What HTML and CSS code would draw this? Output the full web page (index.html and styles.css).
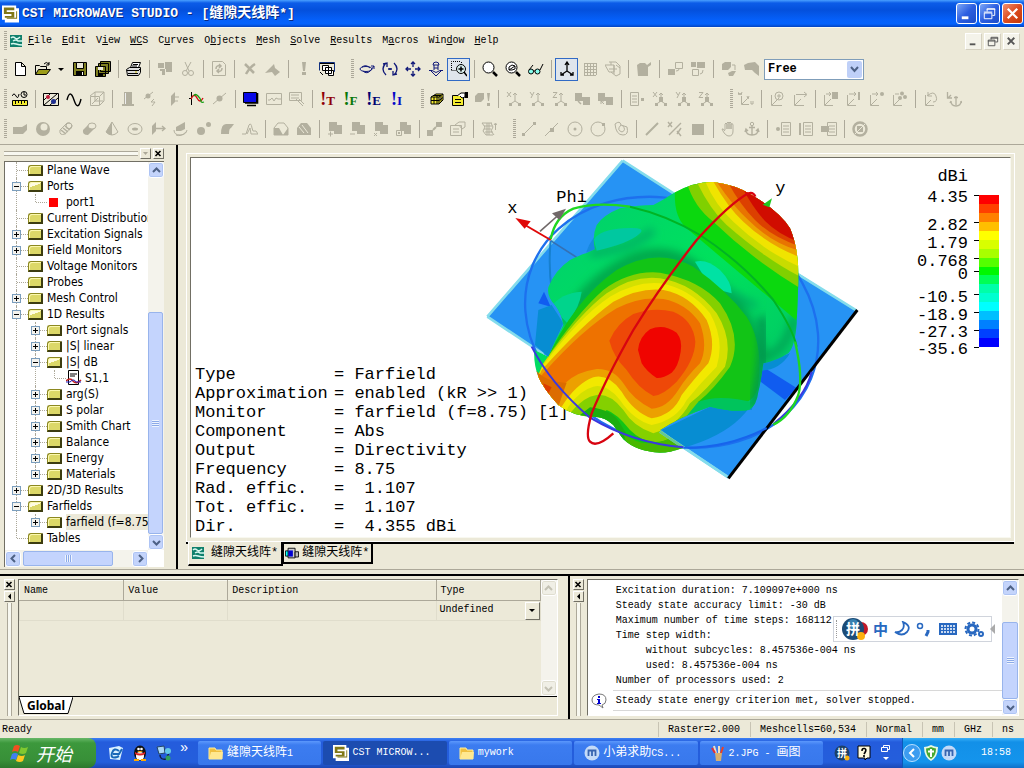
FILE: index.html
```html
<!DOCTYPE html>
<html lang="zh-CN">
<head>
<meta charset="utf-8">
<title>CST MICROWAVE STUDIO</title>
<link rel="stylesheet" href="styles.css">
</head>
<body>
<div class="app">
<header class="title">
  <svg class="logo" viewBox="0 0 18 18"><path d="M0 0h15v3h3v15H3v-3H0z" fill="#fff"/><path d="M2 2h11v3H5v2h8v6H3v-2h7V9H2z" fill="#807818"/><path d="M5 14h11V6h-1v7H5z" fill="#807818"/></svg>
  <h1>CST MICROWAVE STUDIO - [<span>缝隙天线阵</span>*]</h1>
  <button class="wb" aria-label="Minimize"><svg viewBox="0 0 20 20"><path d="M5 13h7v3H5z" fill="#fff"/></svg></button>
  <button class="wb" aria-label="Restore"><svg viewBox="0 0 20 20" fill="none" stroke="#fff"><path d="M7.500 8V5h8v7H13M7 5.500h9"/><path d="M4.500 9.500h8v6h-8zM4 8.500h9"/></svg></button>
  <button class="wb close" aria-label="Close"><svg viewBox="0 0 20 20"><path d="M5 5l10 10M15 5L5 15" stroke="#fff" stroke-width="2.400"/></svg></button>
</header>
<nav class="menu">
  <i class="grip"></i>
  <svg class="mi" viewBox="0 0 14 13"><path d="M0 0h12v12H0z" fill="#10806c"/><path d="M1 3q2-2 4 0t5-1M3 6q3-2 5 0h5M1 9q2-1 5 0t7 1" stroke="#d8f8f0" fill="none" stroke-width="1.500"/></svg>
  <button><u>F</u>ile</button><button><u>E</u>dit</button><button>V<u>i</u>ew</button><button><u>W</u><u>C</u>S</button><button>C<u>u</u>rves</button><button>O<u>b</u>jects</button><button><u>M</u>esh</button><button><u>S</u>olve</button><button><u>R</u>esults</button><button>M<u>a</u>cros</button><button>Win<u>d</u>ow</button><button><u>H</u>elp</button>
  <span class="mdi">
    <button aria-label="Minimize document"><svg viewBox="0 0 16 16"><path d="M4 10h6v2H4z" fill="#555"/></svg></button>
    <button aria-label="Restore document"><svg viewBox="0 0 16 16" fill="none" stroke="#555"><path d="M6.500 6V3.500h7v5H11M6 4.500h8M3.500 6.500h7v6h-7zM3 7.500h8"/></svg></button>
    <button aria-label="Close document"><svg viewBox="0 0 16 16"><path d="M4 4l7 7M11 4l-7 7" stroke="#555" stroke-width="2"/></svg></button>
  </span>
</nav>

<div class="bar" role="toolbar" aria-label="Standard">
  <i class="grip"></i>
  <button class="tb" aria-label="New"><svg viewBox="0 0 16 16"><path d="M3.500 1.500h6l4 4v9h-10zM9.500 1.500v4h4" fill="#fff"/></svg></button>
  <button class="tb" aria-label="Open"><svg viewBox="0 0 16 16"><path d="M.5 13.500v-9h4l1 1h6v3M9 3q2-3 5 0M14 1v3h-3" /><path d="M.5 13.500l3-5h12l-4 5z" fill="#9c9c18"/></svg></button>
  <button class="drop" aria-label="Recent files"></button>
  <button class="tb" aria-label="Save"><svg viewBox="0 0 16 16"><path d="M1.500 1.500h13v13h-13z" fill="#808020"/><path d="M4.500 1.500h7v6h-7z" fill="#ece9d8"/><path class="f" d="M4 10h8v5H4z"/><path d="M10.500 11v3" stroke="#fff"/></svg></button>
  <button class="tb" aria-label="Save all"><svg viewBox="0 0 16 16"><path d="M5.500.5h10v10h-10zM3.500 2.500h10v10h-10zM.5 5.500h10v10H.5z" fill="#808020"/><path d="M3 6h5v3H3z" fill="#ece9d8" stroke="none"/><path class="f" d="M3 12h5v3H3z"/></svg></button>
  <i class="sep"></i>
  <button class="tb" aria-label="Print"><svg viewBox="0 0 16 16"><path d="M4.500 6.500l2-5h8l-2 5M7 3.500h5M6 5h5" fill="#fff"/><path d="M.5 8.500l3-2h11v5l-2 3h-11z" fill="#ddd"/><path d="M1 9.500h12M2 12.500h10M13 9l2-2" /><path d="M9 11h2" stroke="#c8b800"/></svg></button>
  <i class="sep"></i>
  <button class="tb" disabled aria-label="Copy"><svg viewBox="0 0 16 16"><path class="f" d="M1 2h6v5H1zM8 1h7v10H9V8h-1zM3 8h5v6H5v-4H3z"/></svg></button>
  <button class="tb" disabled aria-label="Cut"><svg viewBox="0 0 16 16"><path d="M5 1l4 9M11 1l-5 9"/><circle cx="5" cy="12" r="2.500"/><circle cx="11" cy="12" r="2.500"/></svg></button>
  <i class="sep"></i>
  <button class="tb" disabled aria-label="Update"><svg viewBox="0 0 16 16"><path d="M1.500.5h10l3 3v11h-13z"/><path d="M5 8q0-4 4-3M11 7q0 4-4 3M8 3l2 2-2 2M8 8l-2 2 2 2" stroke-width="1.500"/></svg></button>
  <i class="sep"></i>
  <button class="tb" disabled aria-label="Delete"><svg viewBox="0 0 16 16"><path d="M3 3l9 9M13 3q-5 3-9 10" stroke-width="2.500"/></svg></button>
  <button class="tb" disabled aria-label="Transform"><svg viewBox="0 0 16 16"><path class="f" d="M0 12L9 3l1 4 5 4-5 4-3-4z"/></svg></button>
  <i class="sep"></i>
  <button class="tb" disabled aria-label="Abort"><svg viewBox="0 0 16 16"><path class="f" d="M6 1h4l-1 9H7zM6 11h4v3H6z"/></svg></button>
  <button class="tb" aria-label="Windows"><svg viewBox="0 0 16 16"><path d="M.5 9.500v-8h15v9h-4" stroke="#103080"/><path d="M1 2.500h14M3.500 4.500h6v5h-6zM6.500 6.500h6v6h-6zM9.500 9.500h5v5h-5zM1 11l3 3" stroke="#000" fill="#fff"/></svg></button>
  <i class="grip gap"></i>
  <button class="tb b" aria-label="Rotate plane"><svg viewBox="0 0 16 16"><ellipse cx="7" cy="8" rx="6" ry="2.500"/><path d="M4 10q4 4 8-1l3-4M3 6q4-3 8 1M12 5h3v3"/></svg></button>
  <button class="tb b" aria-label="Rotate"><svg viewBox="0 0 16 16"><path d="M4 2q-6 6 0 12M12 14q6-6 0-12M1 3l4-1v4M15 13l-4 1v-4M6 8h4M8 7v2" stroke-width="1.300"/></svg></button>
  <button class="tb b" aria-label="Pan"><svg viewBox="0 0 16 16"><path d="M8 1v5M8 10v5M1 8h5M10 8h5M6 3l2-2 2 2M6 13l2 2 2-2M3 6L1 8l2 2M13 6l2 2-2 2" stroke-width="1.300"/></svg></button>
  <button class="tb b" aria-label="Dynamic zoom"><svg viewBox="0 0 16 16"><path d="M5 4q0-3 3-3t3 3zM6 7h4M6 4v5M10 4v5M1 9.500h3l4 2 4-2h3M3 10l5 5 5-5"/></svg></button>
  <button class="tb on" aria-label="Zoom window"><svg viewBox="0 0 16 16"><path d="M.5 9V.5H10M.5 9.500H5M10.500 1v3" stroke-dasharray="1 1"/><circle cx="10" cy="8" r="4.500" fill="#d8ecec"/><path d="M10 5.500v5M7.500 8h5M13 11l3 4" stroke-width="1.500"/></svg></button>
  <i class="sep"></i>
  <button class="tb" aria-label="Zoom"><svg viewBox="0 0 16 16"><circle cx="6.500" cy="6.500" r="5.500" fill="#fff"/><path d="M11 11l4 4" stroke-width="2.500"/></svg></button>
  <button class="tb" aria-label="Reset zoom"><svg viewBox="0 0 16 16"><circle cx="6.500" cy="6.500" r="5.500" fill="#fff"/><path d="M4 9V6l3-2 3 1v3l-3 1zM4 9l6-4"/><path d="M11 11l4 4" stroke-width="2.500"/></svg></button>
  <button class="tb" aria-label="View options"><svg viewBox="0 0 16 16"><circle cx="3" cy="10.500" r="2.500" fill="#8fe"/><circle cx="9.500" cy="10.500" r="2.500" fill="#8fe"/><path d="M1 9l4-5M12 9l3-6M5 10h2"/></svg></button>
  <i class="sep"></i>
  <button class="tb on" aria-label="Axes"><svg viewBox="0 0 16 16"><path d="M8 2v8l-6 4M8 10l6 4M6 4l2-3 2 3M2 11v3h3M14 11v3h-3" stroke-width="1.300"/></svg></button>
  <button class="tb" disabled aria-label="Working plane"><svg viewBox="0 0 16 16"><path d="M2.500 2v12M5.500 2v12M8.500 2v12M11.500 2v12M14.500 2v12M2 2.500h12M2 5.500h12M2 8.500h12M2 11.500h12M2 14.500h12"/></svg></button>
  <button class="tb" disabled aria-label="Wireframe"><svg viewBox="0 0 16 16"><path d="M0 4h9v7H4zM4 1l7 0 4 4v8l-4 2-5-4M6 4V1M4 8h8M11 4l4 3M9 4v9"/></svg></button>
  <i class="sep"></i>
  <button class="tb" disabled aria-label="Cutplane"><svg viewBox="0 0 16 16"><path class="f" d="M1 4l3-2h5l2 2 4-3v3l-3 2v9H2z"/></svg></button>
  <i class="sep"></i>
  <button class="tb" disabled aria-label="Hide"><svg viewBox="0 0 16 16"><path class="f" d="M1 8h7v6H1z"/><path d="M8.500 1.500h7v6h-7zM9 10q3 0 3-2" /></svg></button>
  <button class="tb" disabled aria-label="Show"><svg viewBox="0 0 16 16"><path class="f" d="M7 1h8v6H7zM1 1h5v5H1z"/><path d="M2.500 8.500h6v6h-6zM10 13q3 0 3-4"/></svg></button>
  <i class="sep"></i>
  <button class="tb" disabled aria-label="Shape up"><svg viewBox="0 0 16 16"><path class="f" d="M1 3l3-2h6v5L7 9H1zM7 12l4-2h4l-3 5H8z"/><path d="M11 4h3v5"/></svg></button>
  <button class="tb" disabled aria-label="Shape mesh"><svg viewBox="0 0 16 16"><path class="f" d="M0 4l4-2 7-1 4 4v10l-4-3-3-3H1z"/></svg></button>
  <select class="free" aria-label="Rotation mode"><option>Free</option></select>
</div>

<div class="bar" role="toolbar" aria-label="Solver">
  <i class="grip"></i>
  <button class="tb" aria-label="Units"><svg viewBox="0 0 16 16"><path d="M0 5q2-4 4 0t3-2"/><circle cx="12" cy="3.500" r="3"/><path d="M12 1v3h2"/><path d="M.5 9.500h15v5H.5z" fill="#f4ec30"/><path d="M3.500 10v3M6.500 10v2M9.500 10v3M12.500 10v2"/></svg></button>
  <i class="sep"></i>
  <button class="tb" aria-label="Materials"><svg viewBox="0 0 16 16"><path d="M.5 2.500h15v12H.5z"/><path d="M1 14L14 3M1 9l6-6M7 14l8-7"/><circle cx="5" cy="6" r="2" fill="#c02040" stroke="none"/><circle cx="10.500" cy="10.500" r="2.500" fill="#203090" stroke="none"/></svg></button>
  <button class="tb" aria-label="Frequency"><svg viewBox="0 0 16 16"><path d="M1 9q3-12 7 0t7-1" stroke-width="1.400"/></svg></button>
  <button class="tb" disabled aria-label="Boundary"><svg viewBox="0 0 16 16"><path d="M1.500 5.500h9v9h-9zM1 5l5-4h9v9l-4 4M11 5l4-4M3 13l6-6M6 1v9h8"/></svg></button>
  <i class="sep"></i>
  <button class="tb" disabled aria-label="Waveguide port"><svg viewBox="0 0 16 16"><path class="f" d="M4 1h8v12h2v2H2v-2h2z"/><path d="M5.500 2v11" stroke="#eee"/></svg></button>
  <button class="tb" disabled aria-label="Discrete port"><svg viewBox="0 0 16 16"><path d="M1 8l9-7M11 8l-3 3h4l-3 4" /><circle class="f" cx="5" cy="5" r="2.500"/></svg></button>
  <button class="tb" disabled aria-label="Plane wave"><svg viewBox="0 0 16 16"><path class="f" d="M5 5l4-4v10l-4 4z"/><path d="M9 6h4M9 10h3"/></svg></button>
  <button class="tb" aria-label="Signal"><svg viewBox="0 0 16 16"><path d="M2.500 1v13M0 7.500h3" /><path d="M2 8q3-7 6-1t6 0" stroke="#d01010" stroke-width="1.400"/><path d="M5 5q1-3 4 0t3 5 3 1" stroke="#10a010" stroke-width="1.300"/></svg></button>
  <button class="tb" disabled aria-label="Probe"><svg viewBox="0 0 16 16"><path d="M1 13L14 2"/><circle class="f" cx="7.500" cy="7.500" r="3"/></svg></button>
  <i class="sep"></i>
  <button class="tb" aria-label="Solver"><svg viewBox="0 0 16 16"><path d="M.5 1.500h13v10H.5z" fill="#0808e8"/><path d="M14.500 2v10H2M4 14.500h9" stroke-width="1.600"/></svg></button>
  <button class="tb" disabled aria-label="Plot"><svg viewBox="0 0 16 16"><path d="M.5 2.500h15v11H.5zM2 9h2l2-2 2 3 2-3 2 1h3"/></svg></button>
  <button class="tb" disabled aria-label="Plot properties"><svg viewBox="0 0 16 16"><path d="M.5 1.500h12v8H.5zM2 4h8M2 7h8M7 8l7 7M10 8l5 5"/></svg></button>
  <i class="sep"></i>
  <button class="tb ex r">!<b>T</b></button>
  <button class="tb ex g">!<b>F</b></button>
  <button class="tb ex n">!<b>E</b></button>
  <button class="tb ex l">!<b>I</b></button>
  <i class="grip gap"></i>
  <button class="tb" aria-label="Mesh view"><svg viewBox="0 0 16 16"><path d="M2 6l5-3h7v6l-4 4H2zM2 6h8v7M10 6l4-3M2 9.500h8l4-3M5 6v7M8 5v8M5 4.500h7v6" fill="#f4ec30"/></svg></button>
  <button class="tb" aria-label="Mesh properties"><svg viewBox="0 0 16 16"><path d="M.5 4.500h11v10H.5z" fill="#f4ec30"/><path d="M3 8.500h6M3 11.500h6"/><path d="M5 5l4-3h4v4l-3 1-2-2" fill="#fff"/><path class="f" d="M13 1h3v6h-3z"/></svg></button>
  <button class="tb" disabled aria-label="Update mesh"><svg viewBox="0 0 16 16"><path class="f" d="M0 5l3-3h6v6l-3 3H0zM12 2h3l-1 8h-1zM12 12h3v3h-3z"/></svg></button>
  <i class="sep"></i>
  <button class="tb" disabled aria-label="X axis"><svg viewBox="0 0 16 16"><path d="M1 1l4 5M5 1L1 6M9 3v7l-6 4M9 10l6 4M7 4l2-2 2 2"/><path class="f" d="M3 12h3v3H3zM12 12h3v3h-3z"/></svg></button>
  <button class="tb" disabled aria-label="Y axis"><svg viewBox="0 0 16 16"><path d="M1 1l2 3M5 1L2 7M9 3v7l-6 4M9 10l6 4M7 4l2-2 2 2"/><path class="f" d="M3 12h3v3H3zM12 12h3v3h-3z"/></svg></button>
  <button class="tb" disabled aria-label="Z axis"><svg viewBox="0 0 16 16"><path d="M1 1.500h4L1 6.500h4M9 3v7l-6 4M9 10l6 4M7 4l2-2 2 2"/><path class="f" d="M3 12h3v3H3zM12 12h3v3h-3z"/></svg></button>
  <button class="tb" disabled aria-label="Align"><svg viewBox="0 0 16 16"><path class="f" d="M0 2h7v4h8v8H8v-4H0z"/><path d="M3 10l3 3" stroke-width="1.500"/></svg></button>
  <button class="tb" disabled aria-label="Align WCS"><svg viewBox="0 0 16 16"><path class="f" d="M0 2h7v4h8v8H8v-4H0z"/><path d="M3 10l3 3M3 13v-3h3"/></svg></button>
  <i class="sep"></i>
  <button class="tb" disabled aria-label="List"><svg viewBox="0 0 16 16"><path d="M1.500 1.500h8v13h-8zM3 5h5M3 8h5M3 11h5"/><path class="f" d="M12 7h3v3h-3z"/></svg></button>
  <button class="tb" disabled aria-label="Fix X"><svg viewBox="0 0 16 16"><path d="M1 1l4 5M5 1L1 6M9 3v7l-6 4M9 10l6 4M7 4l2-2 2 2"/><path class="f" d="M7 6h4v5H7zM3 12h3v3H3zM12 12h3v3h-3z"/></svg></button>
  <button class="tb" disabled aria-label="Fix Y"><svg viewBox="0 0 16 16"><path d="M1 1l2 3M5 1L2 7M9 3v7l-6 4M9 10l6 4M7 4l2-2 2 2"/><path class="f" d="M7 6h4v5H7zM3 12h3v3H3zM12 12h3v3h-3z"/></svg></button>
  <button class="tb" disabled aria-label="Fix Z"><svg viewBox="0 0 16 16"><path d="M1 1.500h4L1 6.500h4M9 3v7l-6 4M9 10l6 4M7 4l2-2 2 2"/><path class="f" d="M7 6h4v5H7zM3 12h3v3H3zM12 12h3v3h-3z"/></svg></button>
  <i class="grip gap"></i>
  <button class="tb" disabled aria-label="Local WCS"><svg viewBox="0 0 16 16"><path d="M0 1l1 3 1-2 1 2 1-3M3.500 5v8.500H11M4 13l5-5M9 5l1 3 1-3M13 10v3h2v-3"/></svg></button>
  <i class="sep"></i>
  <button class="tb" disabled aria-label="Move WCS"><svg viewBox="0 0 16 16"><path d="M2.500 4v10.500H13M3 14l7-7"/><circle cx="10" cy="5" r="4"/><path d="M10 3v4M8 5h4"/></svg></button>
  <button class="tb" disabled aria-label="Shift WCS"><svg viewBox="0 0 16 16"><path d="M2.500 4v10.500H12M3 14l6-6M4 3.500h10M12 1l3 2.500L12 6"/></svg></button>
  <i class="sep"></i>
  <button class="tb" disabled aria-label="WCS face"><svg viewBox="0 0 16 16"><path d="M1.500 4v10.500H10M2 14l6-6M3 3h5M6 1l2 2-2 2"/><path class="f" d="M9 1h6v7H9z"/></svg></button>
  <button class="tb" disabled aria-label="WCS edge"><svg viewBox="0 0 16 16"><path d="M1.500 4v10.500H10M2 14l6-6M3 3h7M8 1l2 2-2 2"/><path class="f" d="M12 1h2v8h-2z"/></svg></button>
  <button class="tb" disabled aria-label="WCS point"><svg viewBox="0 0 16 16"><path d="M1.500 4v10.500H10M2 14l6-6M3 3h6M7 1l2 2-2 2"/><circle class="f" cx="13" cy="3" r="2"/></svg></button>
  <button class="tb" disabled aria-label="WCS three points"><svg viewBox="0 0 16 16"><path d="M1.500 4v10.500H10M2 14l6-6M3 3h4"/><circle class="f" cx="10" cy="2.500" r="2"/><circle class="f" cx="13" cy="6" r="2"/><circle class="f" cx="8" cy="7" r="2"/></svg></button>
  <i class="sep"></i>
  <button class="tb" disabled aria-label="Rotate WCS"><svg viewBox="0 0 16 16"><path d="M2.500 4v10.500H11M3 14l5-5M4 5q7-6 9 0t-3 6M5 1v4h4"/></svg></button>
  <button class="tb" disabled aria-label="Fix WCS"><svg viewBox="0 0 16 16"><path d="M1.500 1v6H6M2 7l3-3M10 5v9M8 6.500h4M5 10q0 5 5 5t5-5M5 10l-1 2M15 10l1 2" stroke-width="1.300"/></svg></button>
</div>

<div class="bar" role="toolbar" aria-label="Shapes">
  <i class="grip"></i>
  <button class="tb" disabled aria-label="Brick"><svg viewBox="0 0 16 16"><path class="f" d="M1 6h9l5-3v6l-4 4H1z"/></svg></button>
  <button class="tb" disabled aria-label="Sphere"><svg viewBox="0 0 16 16"><circle class="f" cx="8" cy="8" r="7"/><circle cx="9" cy="6" r="3.500" fill="#ece9d8" stroke="none"/></svg></button>
  <button class="tb" disabled aria-label="Cylinder"><svg viewBox="0 0 16 16"><path d="M2 9l7-7q4-1 5 3l-7 8q-6 2-5-4z"/><path d="M3 9l5 4M5 7l5 4M7 5l5 4" stroke-width="1.500"/><circle cx="11" cy="5" r="3"/></svg></button>
  <button class="tb" disabled aria-label="Elliptical cylinder"><svg viewBox="0 0 16 16"><path class="f" d="M2 9l5-5 6 4-6 6q-6 0-5-5z"/><ellipse cx="11" cy="5" rx="4" ry="3" fill="#ece9d8"/></svg></button>
  <button class="tb" disabled aria-label="Cone"><svg viewBox="0 0 16 16"><path d="M8 1l6 10q-6 6-12 0z"/><path class="f" d="M8 1v13q-4 0-6-3z"/></svg></button>
  <button class="tb" disabled aria-label="Torus"><svg viewBox="0 0 16 16"><ellipse cx="8" cy="8" rx="7" ry="5.500"/><ellipse class="f" cx="8" cy="8" rx="3" ry="1.500"/></svg></button>
  <button class="tb" disabled aria-label="Extrude"><svg viewBox="0 0 16 16"><path class="f" d="M2 5l4-4v9l-4 4z"/><path d="M6 7.500h8M12 5l3 2.500-3 2.500" stroke-width="1.400"/></svg></button>
  <button class="tb" disabled aria-label="Rotate profile"><svg viewBox="0 0 16 16"><path class="f" d="M3 6l9-5v7l-4 2-5 0z"/><path d="M1 9q0 5 6 5t7-5M3 14q5 2 10-3"/></svg></button>
  <button class="tb" disabled aria-label="Loft"><svg viewBox="0 0 16 16"><circle class="f" cx="5" cy="10" r="4"/><circle class="f" cx="12.500" cy="3.500" r="2.500"/></svg></button>
  <button class="tb" disabled aria-label="Sheet"><svg viewBox="0 0 16 16"><path class="f" d="M2 13q0-10 5-10h8l-3 4q-2 0-2 6z"/></svg></button>
  <button class="tb" disabled aria-label="Bondwire"><svg viewBox="0 0 16 16"><path d="M0 13h4l3-9q2-3 3 3l1 3h3l2 3H9l-1-6-3 6"/></svg></button>
  <i class="sep"></i>
  <button class="tb" disabled aria-label="Blend"><svg viewBox="0 0 16 16"><path d="M1 7l4-5h6l4 5v7H1z"/><path class="f" d="M1 7h5l4 7H1zM10 14l5-7v7z"/></svg></button>
  <button class="tb" disabled aria-label="Chamfer"><svg viewBox="0 0 16 16"><path class="f" d="M1 7l4-5h6l4 5v7H1z"/><path d="M3 6l5 6M6 4l6 8" stroke="#ece9d8"/></svg></button>
  <i class="sep"></i>
  <button class="tb" disabled aria-label="Add"><svg viewBox="0 0 16 16"><path class="f" d="M2 1h8v3h5v9H7v-3H2z"/><path d="M1 13h5M3.500 10.500v5"/></svg></button>
  <button class="tb" disabled aria-label="Subtract"><svg viewBox="0 0 16 16"><path class="f" d="M2 1h8v3h5v9H7v-3H2z"/><path d="M0 13h5"/></svg></button>
  <button class="tb" disabled aria-label="Intersect"><svg viewBox="0 0 16 16"><path class="f" d="M2 1h8v3h5v9H7v-3H2z"/><path d="M1 12l3 3M4 12l-3 3"/></svg></button>
  <button class="tb" disabled aria-label="Insert"><svg viewBox="0 0 16 16"><path class="f" d="M4 1h7v3h4v9H8v-3H4z"/><path d="M.5 9.500h5v5h-5zM2 11l2 2M4 11l-2 2"/></svg></button>
  <i class="sep"></i>
  <button class="tb" disabled aria-label="Transform shape"><svg viewBox="0 0 16 16"><path class="f" d="M0 9h6v6H0zM9 1h6v5H9z"/><path d="M6 9l3-3" stroke-width="2"/></svg></button>
  <button class="tb" disabled aria-label="Shape properties"><svg viewBox="0 0 16 16"><path d="M.5 4.500h11v10H.5zM3 8h6M3 11h6M5 4l4-3h6v5l-3 2-3-4"/></svg></button>
  <i class="sep"></i>
  <button class="tb" disabled aria-label="Parameters"><svg viewBox="0 0 16 16"><path d="M1 2h10M1 2l3 4-2 4 3 4h7M3 5h8M3 8h7M4 11h8M10 2l2 4-2 4 3 4M14.500 3v6M13 4l1.500-2L16 4M6 2v12M8 2v12"/></svg></button>
  <i class="grip gap"></i>
  <button class="tb" disabled aria-label="Line"><svg viewBox="0 0 16 16"><path d="M3 13L13 3"/><path class="f" d="M1 12h3v3H1zM12 1h3v3h-3z"/></svg></button>
  <button class="tb" disabled aria-label="Midpoint"><svg viewBox="0 0 16 16"><path d="M1 15L14 2"/><path class="f" d="M6 7h4v4H6z"/></svg></button>
  <button class="tb" disabled aria-label="Circle"><svg viewBox="0 0 16 16"><circle cx="8" cy="8" r="7"/><circle class="f" cx="8" cy="8" r="1.500"/></svg></button>
  <button class="tb" disabled aria-label="Circle point"><svg viewBox="0 0 16 16"><circle cx="8" cy="8" r="7"/><path class="f" d="M12 2h3v3h-3z"/></svg></button>
  <button class="tb" disabled aria-label="Curve"><svg viewBox="0 0 16 16"><path d="M2 3q5-4 6 1l6 2q2 8-4 8-7 0-8-11M8 4q-5 5 1 7 5-2 0-7"/></svg></button>
  <i class="sep"></i>
  <button class="tb" disabled aria-label="Pick edge"><svg viewBox="0 0 16 16"><path d="M2 14L14 2" stroke-width="2"/></svg></button>
  <button class="tb" disabled aria-label="Pick point"><svg viewBox="0 0 16 16"><path d="M1 1l4 5M5 1L1 6M2 14L14 2M10 10l4 5M14 7l-4 6" stroke-width="1.400"/></svg></button>
  <button class="tb" disabled aria-label="Pick face"><svg viewBox="0 0 16 16"><path class="f" d="M2 3h12v11H2z"/></svg></button>
  <i class="sep"></i>
  <button class="tb" disabled aria-label="Pick"><svg viewBox="0 0 16 16"><path d="M4 9V3q1-2 2 0v5V2q1-2 2 0v6V2q1-2 2 0v6-5q2-1 2 1v6q0 5-4 5-4 0-7-7 1-1 3 2"/></svg></button>
  <button class="tb" disabled aria-label="Anchor"><svg viewBox="0 0 16 16"><circle cx="8" cy="3" r="1.700"/><path d="M8 5v9M5 6.500h6M2 9q0 5 6 5t6-5M1 11l1-3 2 2M12 10l2-2 1 3" stroke-width="1.400"/></svg></button>
  <i class="sep"></i>
  <button class="tb" disabled aria-label="Point list"><svg viewBox="0 0 16 16"><path d="M6.500 1.500h9v13h-9zM8 5h6M8 8h6M8 11h6"/><circle class="f" cx="3" cy="8" r="2"/></svg></button>
  <button class="tb" disabled aria-label="Edge list"><svg viewBox="0 0 16 16"><path d="M5.500 1.500h9v13h-9zM7 5h6M7 8h6M7 11h6"/><path class="f" d="M1 2h2v12H1z"/></svg></button>
  <button class="tb" disabled aria-label="Face list"><svg viewBox="0 0 16 16"><path d="M6.500 1.500h9v13h-9zM8 5h6M8 8h6M8 11h6"/><path class="f" d="M0 5h8v6H0z"/></svg></button>
  <i class="sep"></i>
  <button class="tb" disabled aria-label="Clear picks"><svg viewBox="0 0 16 16"><circle cx="8" cy="8" r="6.500" stroke-width="2.500"/><path class="f" d="M5 5h6v6H5z"/><path d="M3 13L13 3" stroke="#ece9d8"/></svg></button>
</div>

<main class="main">
  <aside class="side">
    <div class="dock"><i></i><button class="mini" disabled aria-label="Dock menu"><svg viewBox="0 0 9 9"><path d="M2 3h5L4.500 6z" fill="currentColor"/></svg></button><button class="mini" aria-label="Close tree"><svg viewBox="0 0 9 9"><path d="M1.500 2l5 5M6.500 2l-5 5" stroke="#000" stroke-width="1.600"/></svg></button></div>
    <div class="treebox">
      <div class="treescroll">
      <ul class="tree">
        <li><div><i></i><s></s>Plane Wave</div></li>
        <li><div><i class="m"></i><s class="o"></s>Ports</div>
          <ul><li><div><i></i><s class="p"></s>port1</div></li></ul></li>
        <li><div><i></i><s></s>Current Distribution</div></li>
        <li><div><i class="x"></i><s></s>Excitation Signals</div></li>
        <li><div><i class="x"></i><s></s>Field Monitors</div></li>
        <li><div><i></i><s></s>Voltage Monitors</div></li>
        <li><div><i></i><s></s>Probes</div></li>
        <li><div><i class="x"></i><s></s>Mesh Control</div></li>
        <li><div><i class="m"></i><s class="o"></s>1D Results</div>
          <ul>
            <li><div><i class="x"></i><s></s>Port signals</div></li>
            <li><div><i class="x"></i><s></s>|S| linear</div></li>
            <li><div><i class="m"></i><s class="o"></s>|S| dB</div>
              <ul><li><div><i></i><svg viewBox="0 0 16 16"><path d="M2.500.5h10v14h-10z" fill="#fff" stroke="#000"/><path d="M4 4h7M4 6h5" stroke="#000"/><path d="M0 11q4-4 7 0t8-1" fill="none" stroke="#c02020" stroke-width="1.500"/><path d="M0 12h4q4-4 6 0h5" fill="none" stroke="#2020c0"/></svg>S1,1</div></li></ul></li>
            <li><div><i class="x"></i><s></s>arg(S)</div></li>
            <li><div><i class="x"></i><s></s>S polar</div></li>
            <li><div><i class="x"></i><s></s>Smith Chart</div></li>
            <li><div><i class="x"></i><s></s>Balance</div></li>
            <li><div><i class="x"></i><s></s>Energy</div></li>
            <li><div><i class="x"></i><s></s>Materials</div></li>
          </ul></li>
        <li><div><i class="x"></i><s></s>2D/3D Results</div></li>
        <li><div><i class="m"></i><s class="o"></s>Farfields</div>
          <ul><li><div><i class="x"></i><s></s><span class="sel">farfield (f=8.75</span></div></li></ul></li>
        <li><div><i></i><s></s>Tables</div></li>
      </ul>
      </div>
      <div class="vs"><button class="sb" aria-label="Scroll up"><svg viewBox="0 0 9 9"><path d="M1 6l3.500-3.500L8 6"/></svg></button><i class="space"></i><i class="thumb tv"></i><button class="sb" aria-label="Scroll down"><svg viewBox="0 0 9 9"><path d="M1 3l3.500 3.500L8 3"/></svg></button></div>
      <div class="hs"><button class="sb" aria-label="Scroll left"><svg viewBox="0 0 9 9"><path d="M6 1L2.500 4.500 6 8"/></svg></button><i class="thumb th"></i><i class="space"></i><button class="sb" aria-label="Scroll right"><svg viewBox="0 0 9 9"><path d="M3 1l3.500 3.500L3 8"/></svg></button></div>
    </div>
  </aside>
  <section class="work">
    <div class="canvas">
      <dl class="info">
        <dt>Type</dt><dd>= Farfield</dd>
        <dt>Approximation</dt><dd>= enabled (kR &gt;&gt; 1)</dd>
        <dt>Monitor</dt><dd>= farfield (f=8.75) [1]</dd>
        <dt>Component</dt><dd>= Abs</dd>
        <dt>Output</dt><dd>= Directivity</dd>
        <dt>Frequency</dt><dd>= 8.75</dd>
        <dt>Rad. effic.</dt><dd>=  1.107</dd>
        <dt>Tot. effic.</dt><dd>=  1.107</dd>
        <dt>Dir.</dt><dd>=  4.355 dBi</dd>
      </dl>
      <svg class="plot" viewBox="0 24 1200 996">
        <defs>
          <filter id="soft" x="-30%" y="-30%" width="160%" height="160%"><feGaussianBlur stdDeviation="12"/></filter>
          <clipPath id="body"><path d="M580 130Q640 95 700 96Q770 105 815 135Q900 185 930 235Q958 300 955 400L950 520Q945 590 925 610Q890 632 850 640Q842 700 835 725Q830 765 808 780Q760 788 690 770Q600 800 540 840L610 893Q570 908 540 908Q470 905 430 868Q410 840 400 825Q375 800 340 800Q280 800 235 765Q190 715 175 680Q160 640 163 600L205 620Q225 570 250 525Q245 490 225 465Q200 440 205 412Q225 360 270 330Q300 315 318 310L345 298Q335 260 350 225Q370 195 420 175Q480 165 520 165Q550 150 580 130Z"/></clipPath>
          <linearGradient id="base" x1="0" y1="0" x2="1" y2="1"><stop offset="0" stop-color="#00c874"/><stop offset=".5" stop-color="#00e25c"/><stop offset="1" stop-color="#00b86c"/></linearGradient>
        </defs>
        <path d="M428 32L1130 482 745 982 22 500z" fill="#2693f4"/>
        <path d="M428 32L590 136M950 370L1130 482M745 982L540 845M22 500L190 612M22 500L428 32" fill="none" stroke="#84dcec" stroke-width="8"/>
        <ellipse cx="575" cy="517" rx="451" ry="363" transform="rotate(22 575 517)" fill="none" stroke="#1d70ee" stroke-width="7"/>
        <path d="M845 648L950 714 915 750 835 690zM175 460L192 425 212 470z" fill="#105cf0"/>
        <path d="M212 272L290 322" stroke="#3470b4" stroke-width="5"/>
        <path d="M212 272Q205 350 215 420" fill="none" stroke="#1680d0" stroke-width="6"/>
        <path d="M175 480L215 465 250 520 205 620 165 585zM545 840L690 770 815 780 850 640 930 610Q900 660 845 662Q835 830 610 893z" fill="#078dd2"/>
        <path d="M318 308L348 298 342 262Q325 285 318 308z" fill="#1689e0"/>
        <g clip-path="url(#body)">
          <path d="M100 60H1000V940H100z" fill="url(#base)"/>
          <g filter="url(#soft)" fill="none">
            <path d="M330 310Q450 300 520 240" stroke="#00b464" stroke-width="26"/>
            <path d="M255 520Q330 390 460 330Q560 290 650 360Q790 440 850 640" stroke="#00a84c" stroke-width="40"/>
            <path d="M660 350Q740 430 830 470" stroke="#00b060" stroke-width="20"/>
            <path d="M945 500Q920 600 860 620" stroke="#00a454" stroke-width="24"/>
          </g>
          <path d="M342 268Q360 240 430 235Q500 230 480 250Q450 280 350 302z" fill="#00c8a0"/>
          <path d="M215 470Q240 430 305 425Q300 470 262 520z" fill="#00d48c"/>
          <path d="M645 335Q680 325 720 360Q755 395 755 430Q700 420 675 385z" fill="#00e2a4"/>
          <path d="M585 120Q580 200 620 235Q780 370 948 510L1000 300 750 50z" fill="#0bd80e"/>
          <path d="M618 90Q640 170 700 215Q820 330 960 414V300L750 60z" fill="#80d000"/>
          <path d="M645 85Q690 180 740 225Q860 330 970 385V300L750 60z" fill="#c8dc00"/>
          <path d="M670 80Q700 160 760 215Q860 310 970 355V300L750 60z" fill="#f0e400"/>
          <path d="M692 80Q740 170 790 215Q870 290 970 325V300L750 60z" fill="#eca400"/>
          <path d="M700 80Q755 165 805 210Q880 285 970 305L960 240 750 60z" fill="#e87400"/>
          <path d="M740 90Q780 165 825 210Q880 265 970 292L960 240 750 60z" fill="#dc4000"/>
          <path d="M785 110Q820 175 855 213Q900 258 970 280L960 240 800 90z" fill="#d00c00"/>
          <path d="M195 640Q280 450 410 360Q530 290 640 350Q740 420 800 500Q850 580 835 700Q830 770 740 765Q660 760 610 800L560 960H100z" fill="#12c416"/>
          <path d="M190 640Q290 490 370 420Q450 360 540 368Q660 390 720 460Q790 560 750 650Q700 720 655 755Q650 810 580 860Q510 900 450 840Q410 790 380 780L330 850H100z" fill="#84d000"/>
          <path d="M190 640Q300 490 380 430Q460 375 540 385Q640 400 710 490Q760 570 735 650Q680 720 630 760Q590 830 520 850Q460 830 430 780Q390 730 350 735Q310 740 270 790L230 850H100z" fill="#d4e000"/>
          <path d="M190 645Q300 500 390 440Q470 393 540 400Q630 415 690 490Q735 570 710 650Q660 700 620 750Q590 810 515 825Q460 810 420 750Q380 700 340 710Q300 720 265 770L230 850H100z" fill="#f2e800"/>
          <path d="M185 660Q310 520 400 455Q480 412 550 420Q630 435 680 510Q710 580 685 640Q640 690 605 735Q580 795 515 805Q460 785 425 725Q385 670 340 682Q290 700 245 770L220 850H100z" fill="#eca000"/>
          <path d="M190 670Q310 535 410 475Q480 438 550 447Q620 460 660 520Q685 590 660 640Q620 680 595 720Q560 775 515 776Q460 750 430 700Q400 655 350 657Q290 665 255 700L220 780H100z" fill="#ee7200"/>
          <path d="M150 640Q190 700 260 698Q250 725 235 770H100z" fill="#dc6c00"/>
          <path d="M190 700L215 712 200 740z" fill="#dc3c00"/>
          <path d="M388 572Q410 520 460 492Q520 470 580 485Q640 510 646 575Q645 630 590 695Q550 735 520 738Q475 715 440 660Q400 620 388 572z" fill="#ee4808"/>
          <path d="M474 600Q478 560 510 538Q550 520 590 548Q608 570 602 605Q595 650 575 668Q550 685 530 684Q500 665 485 640z" fill="#f00400"/>
          <path d="M330 772Q400 780 420 820L450 870Q400 860 380 810L300 795z" fill="#1cae10"/>
          <path d="M430 850Q500 910 600 850L640 910H450z" fill="#48b800"/>
          <path d="M655 755Q720 730 830 760L790 790Q740 790 690 770L610 810z" fill="#00c45c"/>
          <path d="M845 500Q860 620 820 770" fill="none" stroke="#009850" stroke-width="28" filter="url(#soft)"/>
        </g>
        <path d="M540 845L745 982" stroke="#84dcec" stroke-width="8"/>
        <path d="M540 845L610 893" stroke="#66c890" stroke-width="8"/>
        <path d="M1132 480L745 985" stroke="#000" stroke-width="9"/>
        <path d="M155 590Q210 700 330 803Q460 880 610 892M995 665Q975 745 880 822" fill="none" stroke="#3a38e0" stroke-width="6"/>
        <path d="M610 893Q740 895 860 834" fill="none" stroke="#1764ec" stroke-width="6"/>
        <path d="M212 268Q225 200 280 176Q350 155 450 170" fill="none" stroke="#20d820" stroke-width="7"/>
        <path d="M450 170Q560 195 660 255Q790 340 880 450Q940 540 950 590" fill="none" stroke="#00b424" stroke-width="6"/>
        <path d="M945 575Q970 680 955 735Q930 800 880 824" fill="none" stroke="#20d820" stroke-width="7"/>
        <path d="M826 140Q820 125 805 130Q750 160 650 270Q540 410 460 540Q380 680 335 790Q315 860 330 875Q350 895 400 850" fill="none" stroke="#d80410" stroke-width="7"/>
        <path d="M212 270L130 222" stroke="#e00808" stroke-width="6"/><path d="M106 204L152 214 134 236z" fill="#e00808"/>
        <path d="M180 244L232 198" stroke="#706868" stroke-width="5"/><path d="M258 176L238 210 216 190z" fill="#706868"/>
        <path d="M876 145L868 172 848 164z" fill="#20c820"/>
        <text x="229" y="155">Phi</text><text x="82" y="190">x</text><text x="886" y="130">y</text>
      </svg>
      <svg class="legend" viewBox="0 0 100 196">
        <g shape-rendering="crispEdges">
        <path fill="#f00" d="M70 34h20v9H70z"/><path fill="#ff4000" d="M70 43h20v9H70z"/><path fill="#ff8000" d="M70 52h20v9H70z"/><path fill="#ffbf00" d="M70 61h20v9H70z"/><path fill="#ff0" d="M70 70h20v9H70z"/><path fill="#d8ff00" d="M70 79h20v9H70z"/><path fill="#a8ff00" d="M70 88h20v9H70z"/><path fill="#54ff00" d="M70 97h20v9H70z"/><path fill="#00f800" d="M70 106h20v8H70z"/><path fill="#00ff54" d="M70 114h20v9H70z"/><path fill="#00ffa8" d="M70 123h20v9H70z"/><path fill="#00ffd0" d="M70 132h20v9H70z"/><path fill="#0ff" d="M70 141h20v9H70z"/><path fill="#00bfff" d="M70 150h20v9H70z"/><path fill="#0080ff" d="M70 159h20v9H70z"/><path fill="#0040ff" d="M70 168h20v9H70z"/><path fill="#00f" d="M70 177h20v9H70z"/>
        <path d="M65 34.500h5M65 61.500h5M65 79.500h5M65 97.500h5M65 110.500h5M65 133.500h5M65 151.500h5M65 169.500h5M65 186.500h5" stroke="#000"/>
        </g>
        <g text-anchor="end"><text x="59" y="20">dBi</text><text x="59" y="41">4.35</text><text x="59" y="69">2.82</text><text x="59" y="87">1.79</text><text x="59" y="105">0.768</text><text x="59" y="118">0</text><text x="59" y="141">-10.5</text><text x="59" y="159">-18.9</text><text x="59" y="176">-27.3</text><text x="59" y="193">-35.6</text></g>
      </svg>
    </div>
    <div class="tabs">
      <button class="tab cur"><svg viewBox="0 0 14 13"><path d="M0 0h12v12H0z" fill="#10806c"/><path d="M1 3q2-2 4 0t5-1M3 6q3-2 5 0h5M1 9q2-1 5 0t7 1" stroke="#d8f8f0" fill="none" stroke-width="1.500"/></svg>缝隙天线阵*</button>
      <button class="tab"><svg viewBox="0 0 16 13"><path d="M3.500.5h8v11h-8z" fill="#ccc" stroke="#000"/><path d="M.5 3.500h3v6h-3z" fill="#0ff" stroke="#000"/><path d="M4 3h5v7H4z" fill="#0000d0"/><path d="M11.500 4.500h4v6h-4z" fill="#bbb" stroke="#000"/></svg>缝隙天线阵*</button>
    </div>
  </section>
</main>

<div class="bottom">
  <section class="pane params">
    <div class="vdock"><button class="mini" aria-label="Close parameters"><svg viewBox="0 0 9 9"><path d="M1.500 2l5 5M6.500 2l-5 5" stroke="#000" stroke-width="1.600"/></svg></button><button class="mini" aria-label="Collapse parameters"><svg viewBox="0 0 9 9"><path d="M6 1.500v6L3 4.500z"/></svg></button><i></i></div>
    <div class="well">
      <div class="grid">
        <div class="gridmain">
        <table>
          <colgroup><col class="c1"><col class="c1"><col class="c2"><col></colgroup>
          <tr><th>Name</th><th>Value</th><th>Description</th><th>Type</th></tr>
          <tr><td></td><td></td><td></td><td><div class="cell">Undefined<button class="dd" aria-label="Choose type"></button></div></td></tr>
        </table>
        </div>
        <div class="vs off"><button class="sb" disabled aria-label="Parameters up"><svg viewBox="0 0 9 9"><path d="M1 6l3.500-3.500L8 6"/></svg></button><i class="space"></i><button class="sb" disabled aria-label="Parameters down"><svg viewBox="0 0 9 9"><path d="M1 3l3.500 3.500L8 3"/></svg></button></div>
      </div>
      <div class="sheet"><button>Global</button></div>
    </div>
  </section>
  <section class="pane log">
    <div class="vdock"><button class="mini" aria-label="Close messages"><svg viewBox="0 0 9 9"><path d="M1.500 2l5 5M6.500 2l-5 5" stroke="#000" stroke-width="1.600"/></svg></button><button class="mini" aria-label="Collapse messages"><svg viewBox="0 0 9 9"><path d="M6 1.500v6L3 4.500z"/></svg></button><i></i></div>
    <div class="well white">
      <div class="msgs">
        <pre>Excitation duration: 7.109097e+000 ns
Steady state accuracy limit: -30 dB
Maximum number of time steps: 168112
Time step width:
     without subcycles: 8.457536e-004 ns
     used: 8.457536e-004 ns
Number of processors used: 2</pre>
        <div class="last"><svg viewBox="0 0 16 16"><path d="M8 1q7 0 7 6 0 4-4 5l1 3-4-3Q1 12 1 7t7-6z" fill="#fff" stroke="#777"/><path d="M7 3h2v2H7zM6 6h3v4h1v1H6v-1h1V7H6z" fill="#0000d0"/></svg><p>Steady state energy criterion met, solver stopped.</p></div>
      </div>
      <div class="vs"><button class="sb" aria-label="Messages up"><svg viewBox="0 0 9 9"><path d="M1 6l3.500-3.500L8 6"/></svg></button><i class="space"></i><i class="thumb tm"></i><button class="sb" aria-label="Messages down"><svg viewBox="0 0 9 9"><path d="M1 3l3.500 3.500L8 3"/></svg></button></div>
    </div>
    <div class="ime">
      <i></i>
      <svg class="w28" viewBox="0 0 28 24"><circle cx="20" cy="12" r="7" fill="#c01828"/><circle cx="12" cy="12" r="11" fill="#1c4c78"/><circle cx="12" cy="8" r="6" fill="#3880b0"/><circle cx="20" cy="19" r="4" fill="#fcb010"/><text x="5" y="17">拼</text></svg>
      <b>中</b>
      <svg class="w16" viewBox="0 0 16 16"><path d="M9 1q9 4 4 10-5 5-12 0 4 1 7-2t1-8z" fill="#fff" stroke="#2868c0" stroke-width="1.800"/></svg>
      <svg class="w16" viewBox="0 0 16 16" stroke="#2868c0" fill="none"><circle cx="4" cy="5" r="2.500" stroke-width="1.500"/><path d="M12 9v2l-2 4" stroke-width="3"/></svg>
      <svg class="w20" viewBox="0 0 20 16"><path d="M1 2h18v12H1z" fill="#2868c0"/><path d="M3 5h14M3 8h14M3 11h14" stroke="#fff" stroke-width="1.500" stroke-dasharray="2 1"/></svg>
      <svg class="w20" viewBox="0 0 20 16" fill="none" stroke="#2868c0"><circle cx="8" cy="8" r="4" stroke-width="3"/><circle cx="8" cy="8" r="6.500" stroke-width="2" stroke-dasharray="3 2"/><circle cx="17" cy="13" r="2" stroke-width="2"/></svg>
      <svg class="w5" viewBox="0 0 5 10"><path d="M5 0v10L0 5z" fill="#aaa"/></svg>
    </div>
  </section>
</div>

<footer class="status"><span class="ready">Ready</span><span>Raster=2.000</span><span>Meshcells=60,534</span><span>Normal</span><span>mm</span><span>GHz</span><span>ns</span></footer>

<div class="task">
  <button class="start"><svg viewBox="0 0 20 18"><path d="M4 2q3-2 6 0L8 8q-3-2-6 0z" fill="#f05020"/><path d="M11 3q3 2 7 0l-2 6q-3 2-7 0z" fill="#80c830"/><path d="M2 10q3-2 6 0l-2 6q-3-2-6 0z" fill="#4080f0"/><path d="M8 11q4 2 7 0l-2 6q-3 2-7 0z" fill="#fcc820"/></svg>开始</button>
  <div class="quick">
    <button aria-label="Browser"><svg viewBox="0 0 16 16"><path d="M1 3l10-2 4 2-3 12-10-1z" fill="#d8f0ff"/><path d="M11 6q-5-4-7 2t5 4l2-1M5 9h6L14 4" fill="none" stroke="#1868b8" stroke-width="2"/></svg></button>
    <button aria-label="QQ"><svg viewBox="0 0 16 16"><ellipse cx="8" cy="8" rx="6" ry="7.500" fill="#111"/><ellipse cx="8" cy="11" rx="4" ry="4" fill="#fff"/><path d="M3 7q5 3 10 0v2q-5 3-10 0z" fill="#e02020"/><circle cx="6.500" cy="4" r="1.300" fill="#fff"/><circle cx="9.500" cy="4" r="1.300" fill="#fff"/><path d="M5 6h6l-3 1.500zM2 14h5v2H2zM9 14h5v2H9z" fill="#fa0"/></svg></button>
    <button aria-label="Network"><svg viewBox="0 0 16 16"><path d="M1 2l7-1 1 7-6 1z" fill="#a8d8f8" stroke="#246"/><path d="M4 10q0 5 6 4l3-6" fill="none" stroke="#124" stroke-width="1.500"/><circle cx="12" cy="6" r="3" fill="#60c8e8"/><circle cx="12" cy="13" r="2.500" fill="#30a060"/></svg></button>
    <span>»</span>
  </div>
  <div class="wins">
    <button><svg viewBox="0 0 16 16"><path d="M1 3h6l1 2h6v9H1z" fill="#f0c040" stroke="#fff0a0"/><path d="M1 14l2-7h12l-1 7z" fill="#ffe890"/></svg><span><span class="cj">缝隙天线阵</span>1</span></button>
    <button class="act"><svg viewBox="0 0 18 18"><path d="M0 0h15v3h3v15H3v-3H0z" fill="#fff"/><path d="M2 2h11v3H5v2h8v6H3v-2h7V9H2z" fill="#807818"/><path d="M5 14h11V6h-1v7H5z" fill="#807818"/></svg>CST MICROW...</button>
    <button><svg viewBox="0 0 16 16"><path d="M1 3h6l1 2h6v9H1z" fill="#f0c040" stroke="#fff0a0"/><path d="M1 14l2-7h12l-1 7z" fill="#ffe890"/></svg>mywork</button>
    <button><svg viewBox="0 0 16 16"><circle cx="8" cy="8" r="7.500" fill="#c4daf8"/><path d="M4.500 11V5.500h7V11M8 6v5" fill="none" stroke="#3864b0" stroke-width="1.800"/></svg><span><span class="cj">小弟求助</span>CS...</span></button>
    <button><svg viewBox="0 0 16 16"><path d="M5 8h7l-1 8H6z" fill="#d8b070"/><path d="M6 8L4 1M9 8V1" stroke="#f0e0c0" stroke-width="2"/><path d="M11 8l2-6" stroke="#f04020" stroke-width="2"/><path d="M5 8L2 3" stroke="#e83030" stroke-width="2"/></svg><span>2.JPG - <span class="cj">画图</span></span></button>
  </div>
  <div class="lang">
    <svg viewBox="0 0 16 16"><circle cx="8" cy="8" r="7.500" fill="#1c4068"/><circle cx="13" cy="13" r="2.500" fill="#fcb010"/><text x="3" y="12">拼</text></svg>
    <svg viewBox="0 0 16 16"><path d="M2 1h12v12h-3l-2 2v-2H2z" fill="#fffce0" stroke="#000"/><path d="M6 6q0-3 2.500-2.500T9 7.500L8 9M8 10v2" fill="none" stroke="#000" stroke-width="1.600"/></svg>
    <svg viewBox="0 0 16 16" fill="none" stroke="#fff"><path d="M5.500 3V.5h6v4H10M3.500 2.500h6v4h-6z"/><path d="M5 12h6l-3 3z" fill="#fff" stroke="none"/></svg>
  </div>
  <div class="tray">
    <svg viewBox="0 0 18 18"><circle cx="9" cy="9" r="8.500" fill="#3c9cf0" stroke="#b8e0ff"/><path d="M11 5L7 9l4 4" fill="none" stroke="#fff" stroke-width="2"/></svg>
    <svg viewBox="0 0 16 16"><path d="M8 0q4 2 7 2 0 10-7 14Q1 12 1 2q3 0 7-2z" fill="#e8f8e0"/><path d="M8 2q3 1 5 1.500Q13 11 8 14 3 11 3 3.500 6 3 8 2z" fill="#48a830"/><path d="M8 4v8M5 6.500h6" stroke="#fff" stroke-width="2"/></svg>
    <svg viewBox="0 0 16 16"><circle cx="8" cy="8" r="7.500" fill="#c4daf8"/><path d="M4.500 11V5.500h7V11M8 6v5" fill="none" stroke="#3864b0" stroke-width="1.800"/></svg>
    <time>18:58</time>
  </div>
</div>
</div>
</body>
</html>
```
FILE: styles.css
```css
* { box-sizing: border-box; }
body { margin: 0; background: #ece9d8; color: #000; font: 10px/16px "Liberation Mono", "Noto Sans CJK SC", monospace; }
button { font: inherit; color: inherit; border: 0; padding: 0; margin: 0; background: none; }
svg { display: block; flex: none; }
.app { min-height: 100vh; display: flex; flex-direction: column; }

.title { height: 27px; display: flex; align-items: center; gap: 2px; padding: 0 1px 0 2px; background: linear-gradient(#4aa0ff 0, #0c5ce8 3px, #0450dc 10px, #0560fa 20px, #0462fc 24px, #0444c0 27px); }
.logo { width: 17px; height: 18px; }
.title h1 { flex: 1; margin: 0 0 0 1px; font-size: 13px; line-height: 20px; font-weight: 700; color: #fff; text-shadow: 1px 1px 0 #0a2a80; }
.title h1 span { font-size: 14px; }
.wb { width: 21px; height: 21px; border: 1px solid #fff; border-radius: 3px; background: linear-gradient(135deg, #7ea8f8, #2c5ee0 50%, #1c4cc8); }
.wb svg { width: 19px; height: 19px; }
.close { background: linear-gradient(135deg, #f09070, #dc4c20 50%, #c43808); }

.menu { height: 27px; display: flex; align-items: center; border-top: 1px solid #f8f8f0; }
.menu > button { padding: 0 5px; }
.mi { width: 14px; height: 13px; margin: 0 -1px 0 2px; }
.mdi { margin-left: auto; display: flex; gap: 2px; padding-right: 4px; }
.mdi button { width: 17px; height: 17px; background: #f4f3ea; border: 1px solid; border-color: #fff #d4d0c0 #d4d0c0 #fff; }
.mdi svg { width: 15px; height: 15px; }

.grip { flex: none; width: 8px; height: 20px; background: repeating-linear-gradient(#aca899 0 1px, #ece9d8 1px 2px) 4px 0 / 3px 20px no-repeat; }
.grip.gap { margin-left: 9px; }
.bar { height: 30px; display: flex; align-items: center; }
.tb { flex: none; width: 23px; height: 23px; display: flex; align-items: center; justify-content: center; color: #000; }
.tb svg { width: 16px; height: 16px; fill: none; stroke: currentColor; }
.tb .f { fill: currentColor; stroke: none; }
.tb:disabled { color: #b3b09f; }
.tb.b { color: #101878; }
.tb.on { border: 1px solid #316ac5; background: #dfe5ec; }
.tb.ex { font: 700 18px/20px "Liberation Serif", serif; }
.ex b { font-size: 13px; padding-top: 4px; }
.r { color: #900008; } .g { color: #087808; } .n { color: #000070; } .l { color: #0808c8; }
.tb.r { color: #900008; } .tb.g { color: #087808; } .tb.n { color: #000070; } .tb.l { color: #0808c8; }
.sep { flex: none; width: 8px; height: 18px; background: linear-gradient(#aca899, #aca899) 4px 0 / 1px 18px no-repeat; }
.drop { width: 14px; height: 20px; display: flex; align-items: center; justify-content: center; }
.drop::before, .dd::before { content: ""; border: 3px solid transparent; border-top-color: #000; border-bottom: 0; }
.free { appearance: none; width: 100px; height: 21px; margin-left: 1px; padding: 0 3px; border: 1px solid #7f9db9; border-radius: 0; font: 700 12px/16px "Liberation Mono", monospace; color: #000; background: url("data:image/svg+xml,%3Csvg xmlns='http://www.w3.org/2000/svg' width='15' height='17'%3E%3Crect width='15' height='17' rx='2' fill='%23bfd0f8'/%3E%3Cpath d='M4 6l3.500 4L11 6' fill='none' stroke='%234d6185' stroke-width='2'/%3E%3C/svg%3E") right 1px center no-repeat #fff; }

.main { flex: 1; display: flex; border-top: 1px solid #aca899; min-height: 425px; }
.side { width: 178px; flex: none; display: flex; flex-direction: column; padding: 2px 12px 2px 4px; border-right: 2px solid #000; }
.dock { display: flex; align-items: center; gap: 2px; height: 12px; }
.dock i { flex: 1; height: 5px; border: solid #aca899; border-width: 1px 0; background: #f8f8f0; }
.mini { flex: none; width: 11px; height: 11px; border: 1px solid; border-color: #fff #716f64 #716f64 #fff; }
.mini svg { width: 9px; height: 9px; }
.mini:disabled { color: #aca899; }
.treebox { flex: 1; margin-top: 2px; display: grid; grid-template: minmax(0, 1fr) 17px / minmax(0, 1fr) 16px; background: #fff; border-left: 1px solid #716f64; border-top: 1px solid #716f64; }
.treescroll { overflow: hidden; }
.tree { font: 12px/16px "DejaVu Sans Condensed", "Noto Sans", sans-serif; width: 240px; }
.tree, .tree ul { list-style: none; margin: 0; padding: 0; }
.tree { padding-left: 6px; }
.tree ul { padding-left: 19px; }
.tree li { position: relative; }
.tree li::before { content: ""; position: absolute; left: 5px; top: 0; bottom: 0; border-left: 1px dotted #aca899; }
.tree li:last-child::before { bottom: auto; height: 8px; }
.tree div { display: flex; align-items: center; height: 16px; position: relative; }
.tree i { width: 9px; height: 9px; margin: 0 7px 0 1px; flex: none; }
.tree div::before { content: ""; position: absolute; left: 6px; width: 11px; border-top: 1px dotted #aca899; }
.tree i.x, .tree i.m { position: relative; border: 1px solid #7b9ebd; background: linear-gradient(#000, #000) 1px 3px / 5px 1px no-repeat, #f4f3ee; }
.tree i.x { background: linear-gradient(#000, #000) 1px 3px / 5px 1px no-repeat, linear-gradient(#000, #000) 3px 1px / 1px 5px no-repeat, #f4f3ee; }
.tree s { flex: none; width: 15px; height: 11px; margin-right: 4px; background: #dcd868; border: 1px solid #8c8820; border-right: 2px solid #3c3c10; border-bottom: 2px solid #3c3c10; border-radius: 3px 1px 0 0; box-shadow: inset 1px 1px 0 #fbf8b0; }
.tree s.o { background: linear-gradient(160deg, #fffce0 45%, #dcd868 46%); }
.tree s.p { width: 9px; height: 9px; margin: 0 8px 0 2px; background: #f00; border: 0; border-radius: 0; box-shadow: none; }
.tree div > svg { width: 16px; height: 16px; margin-right: 3px; }
.sel { background: #ece9d8; flex: 1; }

.vs { width: 16px; display: flex; flex-direction: column; background: #f4f3ec; }
.hs { display: flex; align-items: center; background: #f4f3ec; grid-column: 1; }
.space { flex: 1; }
.sb { flex: none; width: 16px; height: 16px; display: flex; align-items: center; justify-content: center; border: 1px solid #fff; border-radius: 3px; background: #c4d4fb; box-shadow: inset 0 0 0 1px #aec4f4; }
.sb svg { width: 9px; height: 9px; fill: none; stroke: #4d6185; stroke-width: 2; }
.thumb { flex: none; border: 1px solid #98b4ec; border-radius: 2px; background: #c4d4fd; display: flex; align-items: center; justify-content: center; }
.thumb::before { content: ""; width: 7px; height: 7px; background: repeating-linear-gradient(#eef4fe 0 1px, #8caae8 1px 2px); }
.tv { width: 15px; height: 222px; }
.th { width: 90px; height: 15px; margin-left: 2px; }
.th::before { background: repeating-linear-gradient(90deg, #eef4fe 0 1px, #8caae8 1px 2px); }
.tm { height: 77px; }
.off .sb { background: #f0efe6; box-shadow: inset 0 0 0 1px #e0ded0; }
.off svg { stroke: #c4c2b4; }

.work { flex: 1; min-width: 0; display: flex; flex-direction: column; padding: 8px 10px 3px 8px; }
.canvas { flex: 1; position: relative; overflow: hidden; display: flex; justify-content: space-between; margin: 4px 3px 0 4px; background: #fff; border: 1px solid; border-color: #716f64 #f8f8f0 #f8f8f0 #716f64; font: 17px/19px "Liberation Mono", monospace; box-shadow: 0 0 0 3px #ece9d8, 0 0 0 4px #fff; }
.info { align-self: flex-end; margin: 0 0 1px 4px; display: grid; grid-template-columns: 139px auto; }
.info dd { margin: 0; white-space: pre; }
.plot { position: absolute; left: 289px; top: 0; width: 400px; height: 332px; }
.plot text { font-size: 51px; }
.legend { width: 100px; height: 196px; margin: 3px 1px 0 0; overflow: visible; }
.tabs { display: flex; height: 24px; margin-top: 4px; border-top: 2px solid #000; }
.tab { display: flex; align-items: center; gap: 3px; height: 20px; padding: 0 2px 0 1px; border: solid #000; border-width: 0 2px 2px 1px; font: 12px/16px "Liberation Mono", "Noto Sans CJK SC", monospace; }
.tab.cur { margin-top: -2px; height: 24px; gap: 5px; padding: 0 3px; background: #ece9d8; margin-left: 2px; border-left-color: #fff; }
.tab svg { width: 14px; height: 13px; }

.bottom { height: 150px; display: flex; border-top: 1px solid #aca899; padding-top: 4px; }
.pane { display: flex; border-top: 2px solid #000; padding: 3px 10px 3px 4px; min-width: 0; position: relative; }
.params { flex: 567 1 0; border-right: 2px solid #000; }
.log { flex: 457 1 0; padding-right: 5px; padding-left: 3px; }
.vdock { width: 14px; flex: none; display: flex; flex-direction: column; gap: 1px; }
.vdock i { flex: 1; width: 5px; margin-left: 3px; border: solid #aca899; border-width: 0 1px; background: #f8f8f0; }
.well { flex: 1; min-width: 0; border: 1px solid; border-color: #716f64 #fff #fff #716f64; display: flex; flex-direction: column; }
.white { background: #fff; flex-direction: row; }
.grid { flex: 1; display: flex; border-bottom: 1px solid #000; }
.gridmain { flex: 1; }
table { width: 100%; border-collapse: collapse; table-layout: fixed; }
.c1 { width: 20%; } .c2 { width: 40%; }
th { height: 20px; padding: 0 4px; font-weight: 400; text-align: left; border: 1px solid; border-color: #f8f8f0 #aca899 #aca899 #f8f8f0; }
td { height: 20px; padding: 0 0 0 3px; border: 1px solid #e0ddcc; }
.cell { display: flex; justify-content: space-between; height: 18px; }
.dd { width: 15px; height: 18px; display: flex; align-items: center; justify-content: center; border: 1px solid; border-color: #fff #716f64 #716f64 #fff; }
.sheet { height: 18px; }
.sheet button { font: 700 12px/16px "Noto Sans", sans-serif; padding: 0 8px; height: 17px; background: url("data:image/svg+xml,%3Csvg xmlns='http://www.w3.org/2000/svg' viewBox='0 0 54 17' preserveAspectRatio='none'%3E%3Cpath d='M0 0l5 16.500h44L54 0' fill='%23fff' stroke='%23000'/%3E%3C/svg%3E") 0 0 / 100% 100% no-repeat; }
.msgs { flex: 1; min-width: 0; padding: 3px 0 0; }
pre { margin: 0 0 0 25px; padding: 0 0 2px 3px; font: inherit; line-height: 15px; border-bottom: 1px solid #d8d8d8; }
.last { display: flex; align-items: center; height: 20px; }
.last svg { width: 16px; height: 16px; margin: 0 6px 0 3px; }
.last p { flex: 1; margin: 0; padding-left: 3px; line-height: 19px; border-bottom: 1px solid #d8d8d8; }
.ime { position: absolute; right: 32px; top: 40px; width: 159px; height: 26px; background: #fff; border: 1px solid #d0d4dc; display: flex; align-items: center; gap: 6px; padding: 0 2px; color: #2868c0; }
.ime i { width: 2px; height: 18px; border-left: 1px dotted #999; }
.ime b { font: 700 15px/20px "Noto Sans CJK SC", sans-serif; }
.ime text { fill: #fff; font: 700 14px "Noto Sans CJK SC", sans-serif; }
.w28 { width: 28px; height: 24px; margin: 0 -2px; } .w16 { width: 16px; height: 16px; } .w20 { width: 20px; height: 16px; } .w5 { width: 5px; height: 10px; }

.status { height: 19px; display: flex; align-items: center; border-top: 1px solid #aca899; line-height: 15px; }
.status span { padding: 0 10px 0 9px; border-left: 1px solid #c8c4b4; }
.status .ready { flex: 1; padding: 0 2px; border: 0; }

.task { height: 30px; display: flex; background: linear-gradient(#3c80f4 0, #245cdc 4px, #245edc 24px, #1c48b4 30px); color: #fff; }
.task svg { width: 16px; height: 16px; }
.start { width: 96px; display: flex; align-items: center; gap: 6px; padding-left: 10px; border-radius: 0 8px 8px 0; background: linear-gradient(#68b868, #3c983c 5px, #389038 22px, #2c782c); font: italic 18px/24px "Noto Sans CJK SC", sans-serif; }
.start svg { width: 20px; height: 18px; }
.quick { width: 102px; display: flex; align-items: center; gap: 8px; padding-left: 12px; }
.quick span { font-size: 14px; line-height: 18px; padding-bottom: 10px; }
.wins { flex: 1; min-width: 0; display: grid; grid-template-columns: repeat(5, minmax(0, 1fr)); gap: 2px; padding: 3px 0; }
.wins button { display: flex; align-items: center; gap: 3px; padding-left: 10px; border-radius: 2px; background: linear-gradient(#5c98fc, #3c7cf0 4px, #3878ec); white-space: nowrap; }
.cj { font-size: 12px; }
.wins .act { background: #1c4cb0; }
.lang { width: 79px; display: flex; align-items: center; gap: 6px; padding-left: 11px; }
.task text { fill: #fff; font: 700 10px "Noto Sans CJK SC", sans-serif; }
.tray { width: 122px; display: flex; align-items: center; gap: 2px; background: linear-gradient(#38b0f8, #1290e8 4px, #1494ec 24px, #1070c8); border-left: 1px solid #0c58b8; }
.tray svg:first-child { width: 18px; height: 18px; }
.tray time { margin-left: auto; padding-right: 13px; }
```
